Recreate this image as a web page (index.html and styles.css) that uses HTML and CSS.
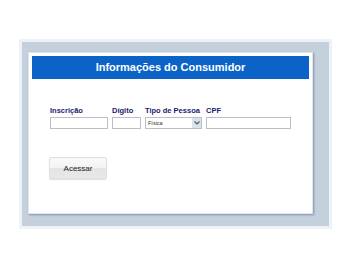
FILE: index.html
```html
<!DOCTYPE html>
<html lang="pt-BR">
<head>
    <meta charset="UTF-8">
    <meta name="viewport" content="width=device-width, initial-scale=1.0">
    <title>Informações do Consumidor</title>
    <link rel="stylesheet" href="styles.css">
</head>
<body>
    <div class="frame">
        <div class="card">
            <h1 class="card-title">Informações do Consumidor</h1>

            <div class="fields">
                <div class="field">
                    <label for="inscricao">Inscrição</label>
                    <input type="text" id="inscricao" class="w-inscricao">
                </div>
                <div class="field">
                    <label for="digito">Dígito</label>
                    <input type="text" id="digito" class="w-digito">
                </div>
                <div class="field">
                    <label>Tipo de Pessoa</label>
                    <div class="select">
                        <span class="select-text">Física</span>
                        <span class="select-arrow">
                            <svg width="6" height="4" viewBox="0 0 6 4"><path d="M0.5 0.5 L3 3 L5.5 0.5" fill="none" stroke="#4a5a78" stroke-width="1.2"/></svg>
                        </span>
                    </div>
                </div>
                <div class="field">
                    <label for="cpf">CPF</label>
                    <input type="text" id="cpf" class="w-cpf">
                </div>
            </div>

            <button class="btn" type="button">Acessar</button>
        </div>
    </div>
</body>
</html>
```

FILE: styles.css
```css
body {
    margin: 0;
    background-color: white;
    font-family: "Liberation Sans", Arial, sans-serif;
}

.frame {
    width: 285px;
    margin: 39px 0 0 19px;
    padding: 10px 16px 12px 6px;
    border: 3px solid #eef1f8;
    background-color: #c5d0dd;
}

.card {
    height: 154px;
    padding: 3px;
    background-color: white;
    border: 1px solid #dfe5ee;
    box-shadow: 1px 1px 2px rgba(60, 70, 90, 0.45);
}

.card-title {
    margin: 0;
    height: 23px;
    line-height: 23px;
    background-color: #0b63c7;
    color: white;
    font-size: 11px;
    font-weight: bold;
    text-align: center;
}

.fields {
    display: flex;
    gap: 4px;
    margin: 27px 0 0 18px;
}

.field {
    display: flex;
    flex-direction: column;
}

.field label {
    height: 11px;
    font-size: 7.5px;
    font-weight: bold;
    color: #1a1a70;
}

.field input,
.select {
    box-sizing: border-box;
    height: 12px;
    margin: 0;
    padding: 0;
    border: 1px solid #b9bfc8;
    background-color: white;
}

.w-inscricao { width: 58px; }
.w-digito { width: 29px; }
.w-cpf { width: 85px; }

.select {
    display: flex;
    align-items: center;
    width: 57px;
}

.select-text {
    flex: 1;
    padding-left: 2px;
    font-size: 5.5px;
    color: #333;
}

.select-arrow {
    display: flex;
    align-items: center;
    justify-content: center;
    width: 9px;
    height: 10px;
    background-color: #dde1e8;
}

.btn {
    display: block;
    width: 58px;
    height: 22px;
    margin: 28px 0 0 17px;
    padding: 0;
    border: 1px solid #e0e0e0;
    border-radius: 2px;
    background: linear-gradient(#f9f9f9 0%, #f3f3f3 50%, #e4e4e4 51%, #e8e8e8 100%);
    box-shadow: 0 1px 1px rgba(0, 0, 0, 0.12);
    font-family: "Liberation Sans", Arial, sans-serif;
    font-size: 8px;
    color: #222;
}
```
